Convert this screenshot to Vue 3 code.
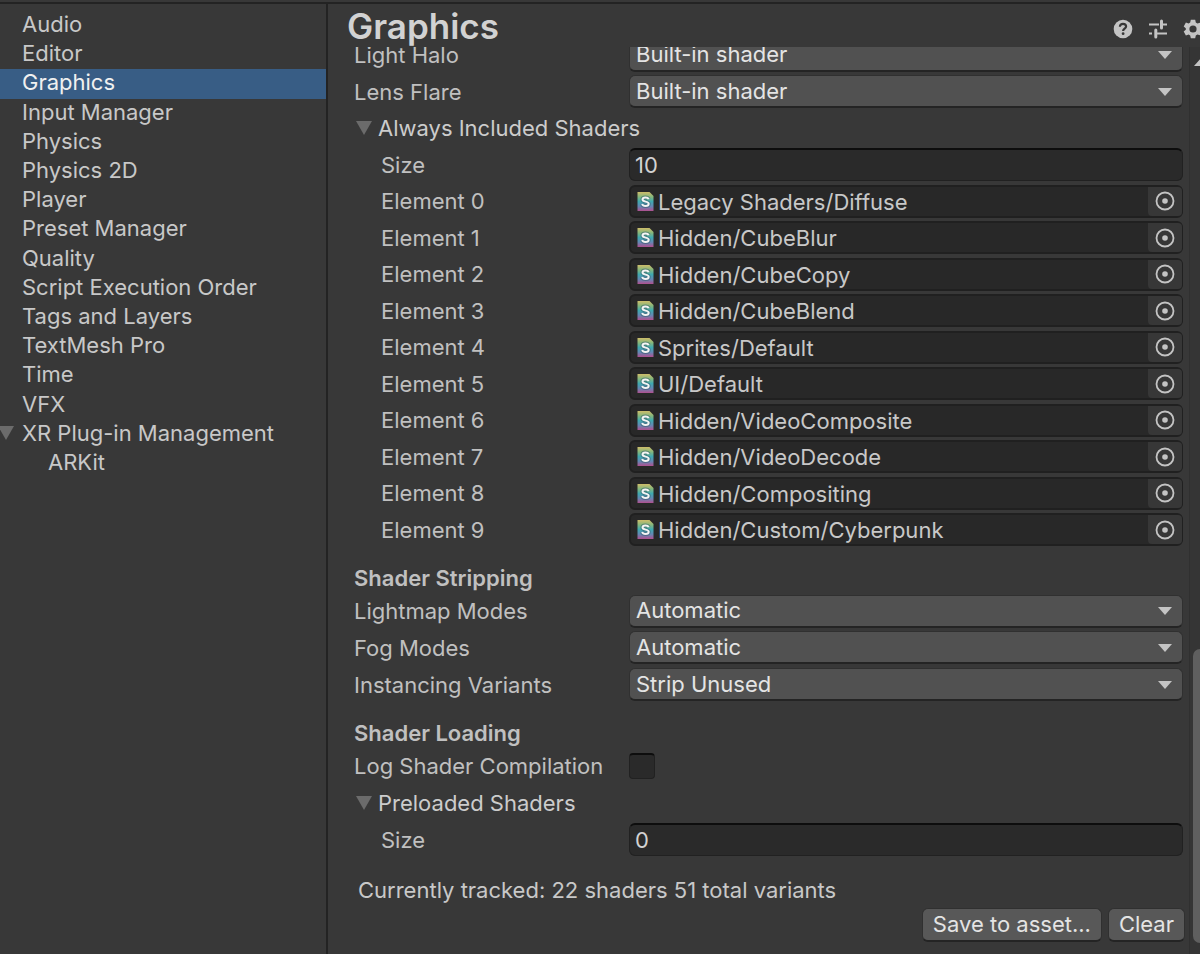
<script setup>
import { ref } from 'vue'

const sections = [
  'Audio', 'Editor', 'Graphics', 'Input Manager', 'Physics', 'Physics 2D', 'Player',
  'Preset Manager', 'Quality', 'Script Execution Order', 'Tags and Layers',
  'TextMesh Pro', 'Time', 'VFX', 'XR Plug-in Management', 'ARKit',
]
const selected = ref('Graphics')

const builtinShaders = ['Light Halo', 'Lens Flare']
const shaders = ref([
  'Legacy Shaders/Diffuse', 'Hidden/CubeBlur', 'Hidden/CubeCopy', 'Hidden/CubeBlend',
  'Sprites/Default', 'UI/Default', 'Hidden/VideoComposite', 'Hidden/VideoDecode',
  'Hidden/Compositing', 'Hidden/Custom/Cyberpunk',
])
const stripping = [
  { label: 'Lightmap Modes', options: ['Automatic', 'Custom'] },
  { label: 'Fog Modes', options: ['Automatic', 'Custom'] },
  { label: 'Instancing Variants', options: ['Strip Unused', 'Strip All', 'Keep All'] },
]
const includedSize = ref('10')
const preloadedSize = ref('0')
const logCompilation = ref(false)
const slug = (text) => text.toLowerCase().replace(/ /g, '-')
</script>

<template>
  <div class="window">
    <nav class="sidebar" aria-label="Project settings">
      <a
        v-for="name in sections"
        :key="name"
        href="#"
        class="section"
        :class="{ active: name === selected, child: name === 'ARKit' }"
        @click.prevent="selected = name"
      >
        <svg v-if="name === 'XR Plug-in Management'" class="branch" viewBox="0 0 16 14" aria-hidden="true">
          <path d="M0 0h16L8 14z" />
        </svg>
        {{ name }}
      </a>
    </nav>

    <main class="panel">
      <header class="header">
        <h1>Graphics</h1>
        <div class="tools">
          <button type="button" aria-label="Help">
            <svg viewBox="0 0 20 20">
              <circle cx="10" cy="10" r="9.3" fill="#c4c4c4" />
              <path d="M6.9 7.8C6.9 5.9 8.2 4.8 10 4.8s3.1 1.1 3.1 2.7c0 2.1-3 2.3-3 4.5" fill="none" stroke="#383838" stroke-width="2.2" />
              <circle cx="10.1" cy="14.7" r="1.4" fill="#383838" />
            </svg>
          </button>
          <button type="button" aria-label="Presets">
            <svg viewBox="0 0 20 20">
              <path d="M1 5.5h10M15 5.5h4M1 14.5h3M9 14.5h10" fill="none" stroke="#c4c4c4" stroke-width="2" />
              <path d="M13.5 2v7M7.8 11v7" fill="none" stroke="#c4c4c4" stroke-width="3" stroke-linecap="round" />
            </svg>
          </button>
          <button type="button" aria-label="Settings">
            <svg viewBox="0 0 20 20">
              <path fill="#c4c4c4" fill-rule="evenodd" d="M7.8.8h4.4l.6 2.8 1.6.9 2.7-.9 2.2 3.8-2.1 1.8v1.6l2.1 1.8-2.2 3.8-2.7-.9-1.6.9-.6 2.8H7.8l-.6-2.8-1.6-.9-2.7.9-2.2-3.8 2.1-1.8V9.2L.7 7.4l2.2-3.8 2.7.9 1.6-.9zM10 6.4a3.6 3.6 0 1 0 0 7.2 3.6 3.6 0 0 0 0-7.2z" />
            </svg>
          </button>
        </div>
      </header>

      <div class="viewport">
        <form class="content" @submit.prevent>
          <div class="rows included">
            <div v-for="label in builtinShaders" :key="label" class="row">
              <label :for="slug(label)">{{ label }}</label>
              <span class="dropdown">
                <select :id="slug(label)">
                  <option>Built-in shader</option>
                  <option>No Support</option>
                  <option>Custom shader</option>
                </select>
                <svg viewBox="0 0 14 8" aria-hidden="true"><path d="M0 0h14L7 8z" /></svg>
              </span>
            </div>
            <button type="button" class="foldout" aria-expanded="true">
              <svg viewBox="0 0 16 14" aria-hidden="true"><path d="M0 0h16L8 14z" /></svg>
              Always Included Shaders
            </button>
            <div class="row nested">
              <label for="included-size">Size</label>
              <input id="included-size" v-model="includedSize" class="field" type="text" />
            </div>
            <div v-for="(shader, i) in shaders" :key="i" class="row nested">
              <label :for="'element-' + i">Element {{ i }}</label>
              <div class="field object">
                <svg class="asset" viewBox="0 0 16 19" aria-hidden="true">
                  <defs>
                    <linearGradient :id="'tint-' + i" x1="0" y1="0" x2="0" y2="1">
                      <stop offset="0" stop-color="#cfbd6a" />
                      <stop offset="0.25" stop-color="#86b77c" />
                      <stop offset="0.5" stop-color="#3fa9b0" />
                      <stop offset="0.75" stop-color="#6388b4" />
                      <stop offset="1" stop-color="#b0508f" />
                    </linearGradient>
                  </defs>
                  <path d="M0 0h12l4 4v15H0z" :fill="`url(#tint-${i})`" />
                  <path d="M11.2 7.1C10.7 5.9 9.5 5.4 8 5.4c-1.7 0-3 .8-3 2.1 0 2.9 6.2 1.3 6.2 4.3 0 1.4-1.4 2.2-3.2 2.2-1.7 0-2.9-.7-3.4-2" fill="none" stroke="#2b5563" stroke-width="4" opacity="0.5" />
                  <path d="M11.2 7.1C10.7 5.9 9.5 5.4 8 5.4c-1.7 0-3 .8-3 2.1 0 2.9 6.2 1.3 6.2 4.3 0 1.4-1.4 2.2-3.2 2.2-1.7 0-2.9-.7-3.4-2" fill="none" stroke="#f4f4f4" stroke-width="2" />
                </svg>
                <span class="asset-name">{{ shader }}</span>
                <button :id="'element-' + i" type="button" class="picker">
                  <svg viewBox="0 0 20 20" aria-hidden="true">
                    <circle cx="10" cy="10" r="8.5" fill="none" stroke="#c4c4c4" stroke-width="1.8" />
                    <circle cx="10" cy="10" r="2.8" fill="#c4c4c4" />
                  </svg>
                </button>
              </div>
            </div>
          </div>

          <h2>Shader Stripping</h2>
          <div class="rows triple">
            <div v-for="item in stripping" :key="item.label" class="row">
              <label :for="slug(item.label)">{{ item.label }}</label>
              <span class="dropdown">
                <select :id="slug(item.label)">
                  <option v-for="option in item.options" :key="option">{{ option }}</option>
                </select>
                <svg viewBox="0 0 14 8" aria-hidden="true"><path d="M0 0h14L7 8z" /></svg>
              </span>
            </div>
          </div>

          <h2>Shader Loading</h2>
          <div class="rows triple">
            <div class="row">
              <label for="log-compilation">Log Shader Compilation</label>
              <input id="log-compilation" v-model="logCompilation" class="check" type="checkbox" />
            </div>
            <button type="button" class="foldout" aria-expanded="true">
              <svg viewBox="0 0 16 14" aria-hidden="true"><path d="M0 0h16L8 14z" /></svg>
              Preloaded Shaders
            </button>
            <div class="row nested">
              <label for="preloaded-size">Size</label>
              <input id="preloaded-size" v-model="preloadedSize" class="field" type="text" />
            </div>
          </div>

          <p class="tracked">Currently tracked: 22 shaders 51 total variants</p>
          <div class="actions">
            <button type="button">Save to asset...</button>
            <button type="button">Clear</button>
          </div>
        </form>

        <div class="scrollbar" aria-hidden="true">
          <svg class="scroll-up" viewBox="0 0 14 8"><path d="M0 8h14L7 0z" /></svg>
          <div class="thumb"></div>
        </div>
      </div>
    </main>
  </div>
</template>

<style>
body {
  background: #383838;
}
</style>

<style scoped>
.window {
  box-sizing: border-box;
  display: flex;
  height: 100vh;
  overflow: hidden;
  border-top: 2px solid #383838;
  background: #383838;
  color: #c0c0c0;
  font-family: Inter, "Liberation Sans", sans-serif;
  font-size: 22px;
  line-height: 28px;
}
.window * {
  box-sizing: border-box;
}
button,
input,
select {
  font: inherit;
  color: inherit;
  margin: 0;
}
.sidebar {
  flex: none;
  display: grid;
  grid-template-rows: repeat(16, 1fr);
  width: 326px;
  height: 476px;
  padding-top: 7px;
  border-top: 2px solid #232323;
  line-height: 26px;
}
.section {
  position: relative;
  display: flex;
  align-items: center;
  padding: 0 0 3px 22px;
  color: #c8c8c8;
  text-decoration: none;
  white-space: nowrap;
}
.section.child {
  padding-left: 48px;
}
.section.active {
  background: #385d85;
  color: #f0f0f0;
}
.branch {
  position: absolute;
  left: -2px;
  width: 16px;
  height: 14px;
  fill: #6b6b6b;
}
.panel {
  flex: 1;
  min-width: 0;
  display: flex;
  flex-direction: column;
  border-left: 2px solid #232323;
  border-top: 2px solid #232323;
}
.header {
  flex: none;
  display: flex;
  align-items: center;
  justify-content: space-between;
  height: 43px;
  padding-left: 19px;
}
h1 {
  margin: 0;
  font-size: 35px;
  line-height: 42px;
  font-weight: 600;
  color: #d2d2d2;
}
.tools {
  display: flex;
  gap: 15px;
  margin-right: -3px;
  padding-top: 7px;
}
.tools button {
  width: 20px;
  height: 20px;
  padding: 0;
  border: 0;
  background: none;
}
.tools svg {
  display: block;
}
.viewport {
  flex: 1;
  min-height: 0;
  display: flex;
  overflow: hidden;
}
.content {
  flex: 1;
  min-width: 0;
  margin-top: -10px;
  padding: 0 6px 0 26px;
}
.rows {
  display: grid;
  grid-auto-rows: 1fr;
}
.included {
  height: 511px;
}
.triple {
  height: 110px;
}
.row {
  display: grid;
  grid-template-columns: 275px 1fr;
  align-items: center;
}
.nested label {
  padding-left: 27px;
}
.foldout {
  display: flex;
  align-items: center;
  gap: 6px;
  padding: 0 0 0 2px;
  border: 0;
  background: none;
  text-align: left;
  color: #cccccc;
}
.foldout svg {
  width: 16px;
  height: 14px;
  fill: #6b6b6b;
}
.dropdown {
  display: grid;
  align-items: center;
}
.dropdown select,
.dropdown svg {
  grid-area: 1 / 1;
}
.dropdown select {
  appearance: none;
  width: 100%;
  height: 33px;
  padding: 0 30px 1px 6px;
  border: 1px solid #303030;
  border-bottom: 2px solid #242424;
  border-radius: 6px;
  background: #515151;
  color: #e4e4e4;
  outline: 0;
}
.dropdown svg {
  justify-self: end;
  width: 14px;
  height: 8px;
  margin-right: 11px;
  fill: #c4c4c4;
  pointer-events: none;
}
.field {
  width: 100%;
  height: 33px;
  padding: 0 5px;
  border: 1px solid #212121;
  border-top: 2px solid #0d0d0d;
  border-radius: 6px;
  background: #2a2a2a;
  color: #d2d2d2;
  outline: 0;
}
.object {
  display: flex;
  align-items: center;
  padding: 0 0 0 6px;
  border: 2px solid #202020;
  border-right-width: 1px;
  background: #282828;
  color: #c8c8c8;
}
.asset {
  flex: none;
  width: 17px;
  height: 19px;
}
.asset-name {
  flex: 1;
  padding: 1px 0 0 4px;
}
.picker {
  display: grid;
  place-items: center;
  width: 34px;
  height: 29px;
  padding: 0;
  border: 0;
  border-radius: 0 4px 4px 4px;
  background: #373737;
}
.picker svg {
  width: 20px;
  height: 20px;
}
.check {
  appearance: none;
  width: 26px;
  height: 26px;
  border: 1px solid #212121;
  border-top: 2px solid #0d0d0d;
  border-radius: 4px;
  background: #2a2a2a;
}
.check:checked {
  background: #385d85;
}
h2 {
  margin: 15px 0 0;
  font-size: 22px;
  line-height: 30px;
  font-weight: 600;
}
.tracked {
  margin: 18px 0 0 4px;
  color: #c8c8c8;
}
.actions {
  display: flex;
  justify-content: flex-end;
  gap: 6px;
  margin: 4px -2px 0 0;
}
.actions button {
  height: 34px;
  padding: 0 10px 2px;
  border: 1px solid #303030;
  border-bottom: 2px solid #242424;
  border-radius: 6px;
  background: #585858;
  color: #e4e4e4;
}
.scrollbar {
  flex: none;
  position: relative;
  width: 11px;
  overflow: hidden;
  border-left: 1px solid #303030;
  background: #353535;
}
.scroll-up {
  position: absolute;
  left: 4px;
  top: 11px;
  width: 14px;
  height: 8px;
  fill: #c4c4c4;
}
.thumb {
  position: absolute;
  left: 3px;
  bottom: 11px;
  width: 14px;
  height: 294px;
  border-radius: 7px;
  background: #5f5f5f;
}
</style>
